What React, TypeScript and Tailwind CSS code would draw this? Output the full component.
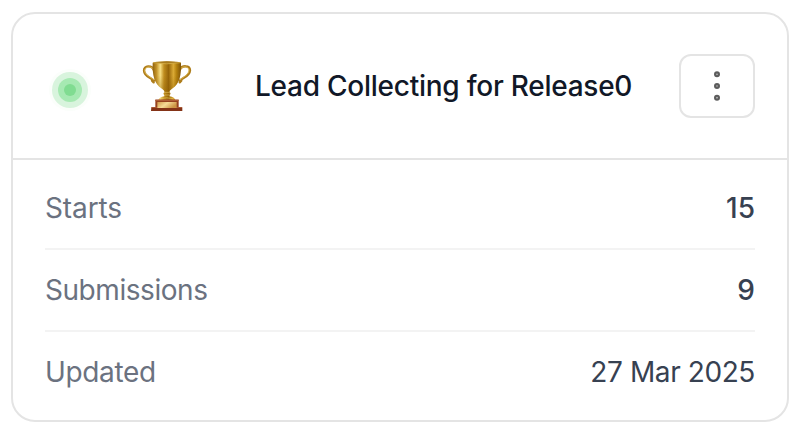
const rows = [
  { label: 'Starts', value: '15', labelClass: 'tracking-[-0.1px]', valueClass: 'font-medium' },
  { label: 'Submissions', value: '9', labelClass: 'tracking-[-0.45px]', valueClass: 'font-medium' },
  { label: 'Updated', value: '27 Mar 2025', labelClass: 'tracking-[-0.35px]', valueClass: 'tracking-[-0.4px]' },
];

function StatusDot() {
  return (
    <svg width="42" height="42" viewBox="0 0 42 42" className="shrink-0" aria-hidden="true">
      <circle cx="21" cy="21" r="21" fill="#fbfefb" />
      <circle cx="21" cy="21" r="18" fill="#d8f4dd" />
      <circle cx="21" cy="21" r="12" fill="#a6e9b2" />
      <circle cx="21" cy="21" r="6" fill="#80dc91" />
    </svg>
  );
}

function Trophy() {
  return (
    <svg width="50" height="52" viewBox="37 31 150 156" className="shrink-0" aria-hidden="true">
      <defs>
        <linearGradient id="cup" x1="0" x2="1">
          <stop offset="0" stopColor="#8f610d" />
          <stop offset="0.14" stopColor="#c4942a" />
          <stop offset="0.27" stopColor="#f7df83" />
          <stop offset="0.4" stopColor="#c08d1e" />
          <stop offset="0.56" stopColor="#966509" />
          <stop offset="0.73" stopColor="#dbaa35" />
          <stop offset="0.84" stopColor="#b5820f" />
          <stop offset="1" stopColor="#7e5308" />
        </linearGradient>
        <linearGradient id="shade" x1="0" x2="0" y1="0" y2="1">
          <stop offset="0.45" stopColor="#8a5b00" stopOpacity="0" />
          <stop offset="1" stopColor="#8a5b00" stopOpacity="0.4" />
        </linearGradient>
        <linearGradient id="plate" x1="0" x2="1" y1="0" y2="0.4">
          <stop offset="0" stopColor="#d09a48" />
          <stop offset="0.5" stopColor="#f6dc98" />
          <stop offset="1" stopColor="#cc9443" />
        </linearGradient>
      </defs>
      <g fill="none" strokeLinecap="round">
        <path d="M72 61C67 46 42 47 43 63C44 81 62 82 73 93M67 93L72 98M150 61C156 46 181 46 181 62C180 80 162 82 150 93M155 93L150 98" stroke="#ae7d1b" strokeWidth="7" />
        <path d="M70 57C63 48 45 51 45 63C47 78 63 81 72 90M153 57C159 48 177 50 178 61C177 77 162 80 152 90" stroke="#dfb954" strokeWidth="2.8" />
      </g>
      <path d="M69 39Q111 32 154 39C155 75 151 102 127 117Q119 122 119 128Q126 131 120 136L120 140Q134 142 137 152H86Q89 142 104 140L104 136Q98 131 105 128Q105 122 97 117C73 102 68 75 69 39Z" fill="url(#cup)" />
      <path d="M69 39Q111 32 154 39C155 75 151 102 127 117Q119 122 119 128H105Q105 122 97 117C73 102 68 75 69 39Z" fill="url(#shade)" />
      <ellipse cx="111.5" cy="38.5" rx="42" ry="3.5" fill="#a97b1c" />
      <path d="M70 39Q111 46 153 39" fill="none" stroke="#dfbb55" strokeWidth="2" />
      <path d="M105 128H119M105 136H119M93 147Q111 142 130 147" fill="none" stroke="#e3bf58" strokeWidth="2" />
      <path d="M77 150H147V174H77Z" fill="#96421f" />
      <path d="M77 150H147V154H77Z" fill="#ad5d35" />
      <path d="M65 173H158V184H64Z" fill="#843317" />
      <path d="M66 173.5H157" stroke="#a95732" strokeWidth="3" />
      <path d="M83 157H141V175H83Z" fill="url(#plate)" />
    </svg>
  );
}

export default function App() {
  return (
    <main className="h-[436px] w-[806px] bg-white pt-3 pl-[11px] font-['Inter',sans-serif] text-[28px] leading-10">
      <section className="h-[410px] w-[778px] rounded-3xl border-2 border-[#e4e4e4] bg-white">
        <header className="flex h-[146px] items-center border-b-2 border-[#e4e4e4] pr-8 pl-9">
          <div className="mt-2">
            <StatusDot />
          </div>
          <div className="ml-[51px]">
            <Trophy />
          </div>
          <h1 className="ml-[63px] flex-1 whitespace-nowrap font-medium tracking-[-0.25px] text-[#111827]">
            Lead Collecting for Release0
          </h1>
          <button
            type="button"
            aria-label="More options"
            className="flex h-16 w-[76px] shrink-0 items-center justify-center rounded-xl border-2 border-[#e4e4e4] bg-white"
          >
            <svg width="40" height="40" viewBox="0 0 24 24" fill="#bdbdbd" stroke="#5c5c5c" strokeWidth="1.3">
              <circle cx="12" cy="5" r="1.15" />
              <circle cx="12" cy="12" r="1.15" />
              <circle cx="12" cy="19" r="1.15" />
            </svg>
          </button>
        </header>
        <dl className="px-8 pt-2">
          {rows.map((row) => (
            <div
              key={row.label}
              className="flex h-[82px] items-center justify-between border-b-2 border-[#f3f3f3] last:border-transparent"
            >
              <dt className={`${row.labelClass} text-[#6b7280]`}>{row.label}</dt>
              <dd className={`${row.valueClass} text-[#374151]`}>{row.value}</dd>
            </div>
          ))}
        </dl>
      </section>
    </main>
  );
}
